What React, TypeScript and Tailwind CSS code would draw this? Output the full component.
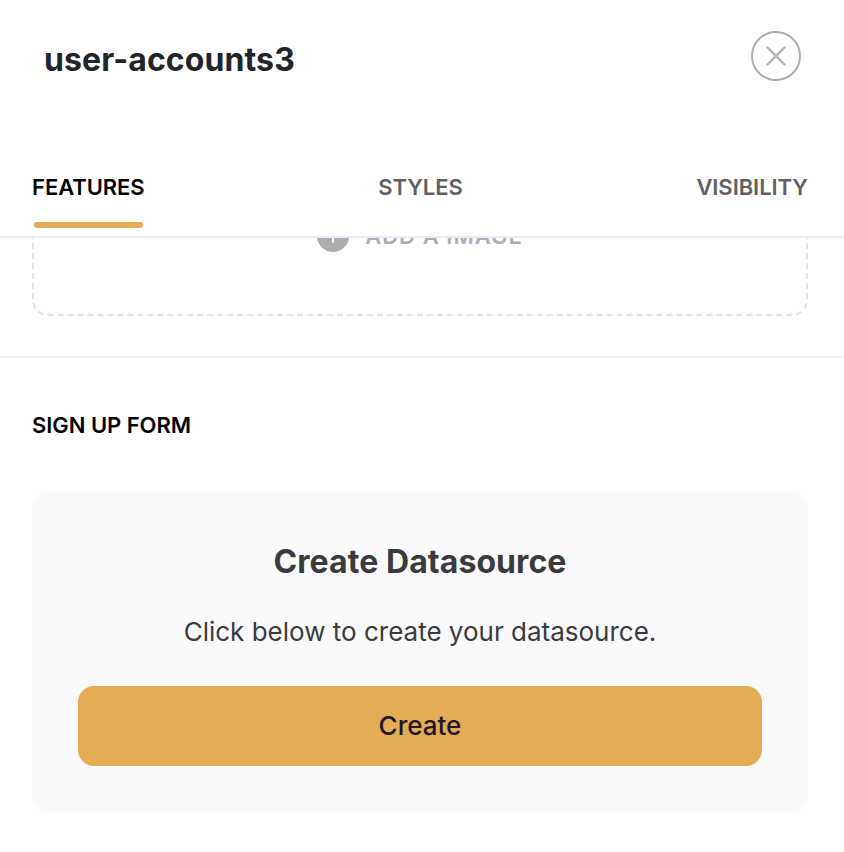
import React from "react";

const tabs = ["Features", "Styles", "Visibility"];

const Header = ({ title }: { title: string }) => (
  <header className="flex h-[158px] items-start justify-between pt-[31px] pr-[43px] pl-11">
    <h1 className="pt-1.5 text-[32px] leading-[46px] font-bold tracking-[0.1px] text-[#212529]">{title}</h1>
    <button
      aria-label="Close"
      className="flex size-[50px] items-center justify-center rounded-full border-2 border-[#aeadb4] text-[#aeadb4]"
    >
      <svg width="20" height="20" viewBox="0 0 20 20" fill="none" stroke="currentColor" strokeWidth="2.2">
        <path d="M1.5 1.5l17 17M18.5 1.5l-17 17" strokeLinecap="round" />
      </svg>
    </button>
  </header>
);

const Tabs = () => (
  <nav className="flex h-20 shrink-0 justify-between border-b-2 border-[#ebebf2] pr-9 pl-8">
    {tabs.map((tab, index) => (
      <button
        key={tab}
        className={`flex flex-col pt-[13px] text-[22px] leading-8 font-semibold tracking-[-0.05px] uppercase ${
          index === 0 ? "text-black" : "text-[#5f5f64]"
        }`}
      >
        {tab}
        {index === 0 && <span className="mt-[19px] h-1.5 w-[109px] self-center rounded-full bg-[#e4ac55]" />}
      </button>
    ))}
  </nav>
);

// Scrolled part way under the tab bar
const ImageDrop = () => (
  <section className="h-[120px] overflow-hidden border-b-2 border-[#f0f0f1] pr-9 pl-8">
    <div className="-mt-[82px] flex h-40 items-center justify-center rounded-2xl border-2 border-dashed border-[#e3e3e8]">
      <div className="flex items-center gap-4 text-[#aeadb4]">
        <svg width="32" height="32" viewBox="0 0 32 32">
          <circle cx="16" cy="16" r="16" fill="currentColor" />
          <path d="M16 9.5v13M9.5 16h13" stroke="white" strokeWidth="2" />
        </svg>
        <span className="text-[22px] font-semibold tracking-[1.05px] uppercase">Add a image</span>
      </div>
    </div>
  </section>
);

export default function App() {
  return (
    <main className="h-[852px] overflow-hidden bg-white font-['Inter',sans-serif]">
      <Header title="user-accounts3" />
      <Tabs />
      <ImageDrop />
      <section className="pt-[51px] pr-9 pl-8">
        <h2 className="text-[22px] leading-8 font-semibold tracking-[-0.05px] text-black uppercase">Sign up form</h2>
        <div className="mt-[51px] flex h-80 flex-col items-center rounded-2xl bg-[#fafafc] px-[46px] pt-12">
          <h3 className="text-[32px] leading-11 font-bold tracking-[0.07px] text-[#3a3b3d]">Create Datasource</h3>
          <p className="mt-7 text-[26px] leading-10 text-[#3a3b3d]">Click below to create your datasource.</p>
          <button className="mt-[34px] h-20 w-full rounded-2xl bg-[#e4ac55] pb-0.5 text-[26px] font-medium text-[#20152c]">
            Create
          </button>
        </div>
      </section>
    </main>
  );
}
